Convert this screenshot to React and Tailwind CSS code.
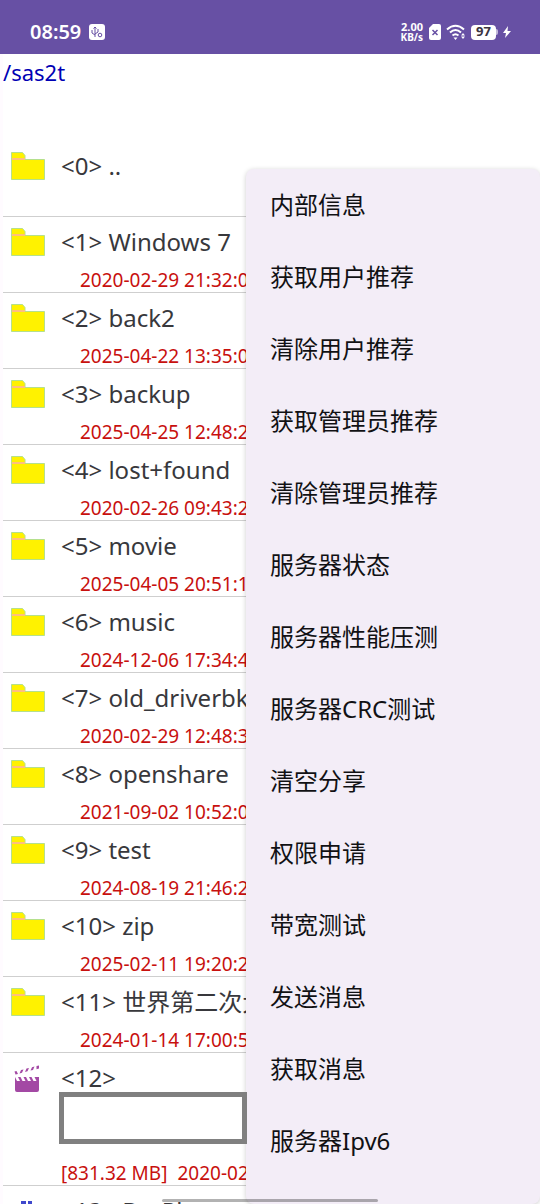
import { memo } from 'react';

// Directory entries shown in the list
const FOLDERS = [
  { name: '..', date: '' },
  { name: 'Windows 7', date: '2020-02-29 21:32:08' },
  { name: 'back2', date: '2025-04-22 13:35:06' },
  { name: 'backup', date: '2025-04-25 12:48:20' },
  { name: 'lost+found', date: '2020-02-26 09:43:22' },
  { name: 'movie', date: '2025-04-05 20:51:10' },
  { name: 'music', date: '2024-12-06 17:34:40' },
  { name: 'old_driverbk', date: '2020-02-29 12:48:30' },
  { name: 'openshare', date: '2021-09-02 10:52:06' },
  { name: 'test', date: '2024-08-19 21:46:20' },
  { name: 'zip', date: '2025-02-11 19:20:20' },
  { name: '世界第二次大战', date: '2024-01-14 17:00:50' }
];

const MENU_ITEMS = [
  '内部信息',
  '获取用户推荐',
  '清除用户推荐',
  '获取管理员推荐',
  '清除管理员推荐',
  '服务器状态',
  '服务器性能压测',
  '服务器CRC测试',
  '清空分享',
  '权限申请',
  '带宽测试',
  '发送消息',
  '获取消息',
  '服务器Ipv6'
];

const FolderIcon = () => (
  <svg className="w-9 h-7 shrink-0" viewBox="0 0 36 28" aria-hidden="true">
    <path d="M1.500 27.500V.5h11l2.500 3v4h19.500v20z" fill="#fff200" stroke="#b5e08c" />
    <rect x="2" y="6" width="13" height="2" fill="#ffbf7f" />
  </svg>
);

const ClapperIcon = () => (
  <svg className="w-9 h-7 shrink-0" viewBox="0 0 36 28" fill="#a349a4" aria-hidden="true">
    <path d="M4.500 7.500l2-.5 1.500 3-2.500.6zM11 6l2.500-.6-1.500 3.400-2.500.6zM16.500 4.500l2.500-.6L17.500 7.300l-2.500.6zM22 3.200l2.500-.6L23 6l-2.500.6zM26.500 2l2.500-.6v3.200l-2.500.6z" />
    <path d="M5 13l2 4h3l-2-4h2.500l2 4h3l-2-4H16l2 4h3l-2-4h2.500l2 4h3l-2-4H29v13q0 2-2 2H7q-2 0-2-2z" />
  </svg>
);

const MusicIcon = () => (
  <svg className="w-9 h-7 shrink-0" viewBox="0 0 36 28" fill="#3f48cc" aria-hidden="true">
    <path d="M11 4h5v18h-5zM18 4h4v18h-4z" />
  </svg>
);

const StatusBar = () => (
  <header className="flex h-[54px] shrink-0 items-end justify-between bg-[#6750a4] pl-[30px] pr-[29px] pb-2 text-white">
    <div className="flex h-7 items-center gap-2">
      <span className="font-['Noto_Sans',sans-serif] text-xl font-semibold">08:59</span>
      <svg className="size-4" viewBox="0 0 16 16" aria-hidden="true">
        <rect width="16" height="16" rx="3" fill="#fff" />
        <g fill="none" stroke="#6750a4">
          <path d="M6 13V3M4.500 4.500L6 3l1.500 1.500M3 6v3l3 2M9 5v3l-3 2" />
          <circle cx="11" cy="11" r="1.800" />
        </g>
      </svg>
    </div>
    <div className="flex h-7 items-center gap-[5px]">
      <div className="text-right font-['Noto_Sans',sans-serif] text-[10px] font-bold leading-[10px]">
        <div className="text-[11px] leading-[10px]">2.00</div>
        <div>KB/s</div>
      </div>
      <svg className="ml-px h-4 w-3" viewBox="0 0 12 16" aria-hidden="true">
        <path d="M4 0h6q2 0 2 2v12q0 2-2 2H2q-2 0-2-2V4z" fill="#fff" />
        <path d="M3.500 6l5 5M8.500 6l-5 5" stroke="#6750a4" strokeWidth="1.500" />
      </svg>
      <svg className="h-4 w-5" viewBox="0 0 20 16" aria-hidden="true">
        <g fill="none" stroke="#fff" strokeWidth="2">
          <path d="M1 5.500q8.500-7.500 17 0M4 8.500q5.500-5 11 0M6.500 11.500q3-2.500 6 0" />
        </g>
        <path d="M7.500 13.500h4L9.500 16zM15 11.500l2-2.500 2 2.500zM15 12.500h4l-2 2.500z" fill="#fff" />
      </svg>
      <div className="flex items-center">
        <span className="flex h-[15px] w-[25px] items-center justify-center rounded-sm bg-white font-['Noto_Sans',sans-serif] text-[13px] font-bold text-[#3a3340]">
          97
        </span>
        <span className="h-1.5 w-0.5 rounded-r-sm bg-white/60" />
      </div>
      <svg className="h-3 w-2" viewBox="0 0 8 12" fill="#fff" aria-hidden="true">
        <path d="M5 0L0 7h3l-1 5 6-7H4.500z" />
      </svg>
    </div>
  </header>
);

const FileRow = memo(({ index, name, date }) => (
  <li className="flex h-[76px] border-b border-[#cfcfcf] pl-[7px] pt-[11px]">
    <FolderIcon />
    <div className="ml-[15px] min-w-0 flex-1 whitespace-nowrap">
      <div className="text-2xl leading-7 text-[#38383c]">{`<${index}> ${name}`}</div>
      <div className="mt-3.5 pl-[19px] text-[19px] leading-5 text-[#c8100e]">{date}</div>
    </div>
  </li>
));

FileRow.displayName = 'FileRow';

const OptionsMenu = () => (
  <nav className="absolute top-[169px] right-0 bottom-0 w-[294px] overflow-hidden rounded-lg bg-[#f3edf7] shadow-[0_1px_5px_rgba(0,0,0,0.2)]">
    <ul>
      {MENU_ITEMS.map((item) => (
        <li key={item}>
          <button type="button" className="h-[72px] w-full px-6 text-left text-2xl text-[#111114]">
            {item}
          </button>
        </li>
      ))}
    </ul>
  </nav>
);

export default function App() {
  return (
    <div className="relative flex h-screen flex-col overflow-hidden bg-[#fffbff] font-['Noto_Sans','Noto_Sans_CJK_SC',sans-serif] font-[380]">
      <StatusBar />
      <main className="ml-[3px] min-h-0 flex-1 overflow-hidden bg-white">
        <h1 className="h-[87px] pt-1 text-[22px] leading-7 font-normal text-[#0000b4]">/sas2t</h1>
        <ul>
          {FOLDERS.map((folder, index) => (
            <FileRow key={folder.name} index={index} name={folder.name} date={folder.date} />
          ))}
          <li className="flex h-[133px] border-b border-[#cfcfcf] pl-[7px] pt-[11px]">
            <ClapperIcon />
            <div className="ml-[15px] whitespace-nowrap">
              <div className="text-2xl leading-7 text-[#38383c]">{'<12>'}</div>
              {/* Hidden name field, the tail of the wrapped name shows below it */}
              <div className="relative mt-7 h-7 text-2xl leading-7 text-[#38383c]">
                .&nbsp; mkv
                <div className="absolute -top-7 -left-[2px] z-10 h-[52px] w-[188px] border-[5px] border-[#808080] bg-white" />
              </div>
              <div className="mt-[15px] text-[19px] leading-5 text-[#c8100e]">
                [831.32 MB]<span className="ml-2.5">2020-02-29</span>
              </div>
            </div>
          </li>
          <li className="flex h-[76px] pl-[7px] pt-[11px]">
            <MusicIcon />
            <div className="ml-[15px] text-2xl leading-7 whitespace-nowrap text-[#38383c]">{'<13> DvrPlay'}</div>
          </li>
        </ul>
      </main>
      <OptionsMenu />
      <div className="absolute bottom-0.5 left-1/2 -ml-[108px] h-[3px] w-[216px] rounded-full bg-black/30" />
    </div>
  );
}
